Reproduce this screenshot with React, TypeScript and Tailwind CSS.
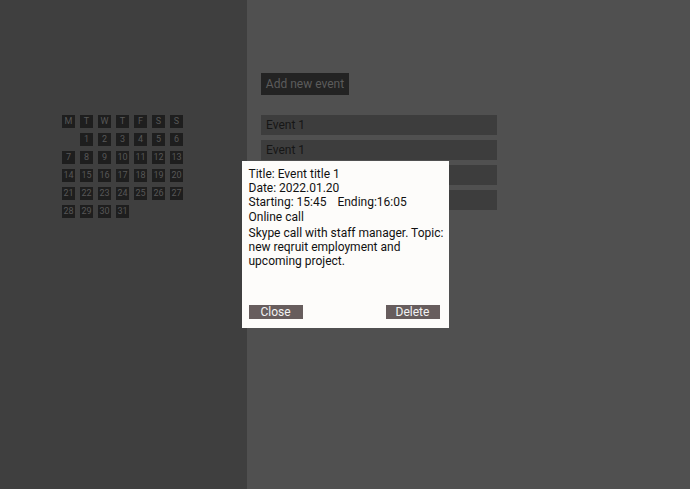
const days = ["M", "T", "W", "T", "F", "S", "S"];

function Cell({ label }: { label: string }) {
  return (
    <div className="flex h-[13px] w-[13px] items-center justify-center bg-[#1e1e1e] text-[9px] leading-none text-[#575757]">
      {label}
    </div>
  );
}

export default function App() {
  const dates: (string | null)[] = [null];
  for (let d = 1; d <= 31; d++) dates.push(String(d));

  return (
    <div
      className="relative flex h-[489px] w-[690px] overflow-hidden"
      style={{ fontFamily: "Roboto, 'Liberation Sans', sans-serif" }}
    >
      <aside className="w-[247px] shrink-0 bg-[#3f3f3f] pl-[62px] pt-[115px]">
        <div className="grid w-fit grid-cols-7 gap-[5px]">
          {days.map((d, i) => (
            <Cell key={"h" + i} label={d} />
          ))}
          {dates.map((d, i) =>
            d ? <Cell key={i} label={d} /> : <div key={i} className="h-[13px] w-[13px]" />
          )}
        </div>
      </aside>

      <main className="flex-1 bg-[#505050] pl-[14px] pt-[73px]">
        <button className="block h-[22px] w-[88px] bg-[#232323] text-[12px] text-[#5c5c5c]">
          Add new event
        </button>
        <ul className="mt-[20px] flex w-[236px] flex-col gap-[5px]">
          {[0, 1, 2, 3].map((i) => (
            <li
              key={i}
              className="flex h-[20px] items-center bg-[#3d3d3d] pl-[5px] text-[12px] text-[#161616]"
            >
              Event 1
            </li>
          ))}
        </ul>
      </main>

      <div className="absolute inset-0 flex items-center justify-center">
        <div className="flex h-[167px] w-[207px] flex-col bg-[#fdfcfa] pb-[9px] pl-[7px] pr-[1px] pt-[6px] text-[12px] leading-[14px] text-[#111]">
          <p>Title: Event title 1</p>
          <p>Date: 2022.01.20</p>
          <p>
            Starting: 15:45<span className="ml-[11px]">Ending:16:05</span>
          </p>
          <p className="mt-[1px]">Online call</p>
          <p className="mt-[2px]">
            Skype call with staff manager. Topic: new reqruit employment and upcoming project.
          </p>
          <div className="mt-auto flex justify-between pr-[8px]">
            <button className="h-[14px] w-[54px] bg-[#675d5d] text-[12px] leading-none text-[#f2f2f2]">
              Close
            </button>
            <button className="h-[14px] w-[54px] bg-[#675d5d] text-[12px] leading-none text-[#f2f2f2]">
              Delete
            </button>
          </div>
        </div>
      </div>
    </div>
  );
}
